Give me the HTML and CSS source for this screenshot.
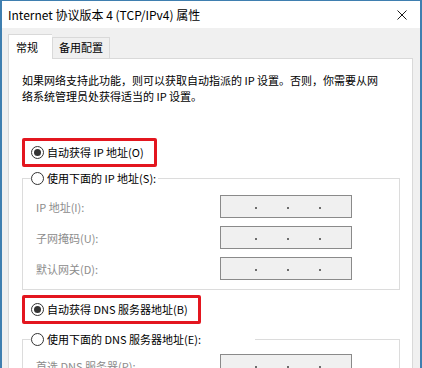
FILE: index.html
```html
<!DOCTYPE html>
<html>
	<head>
		<meta charset="utf-8">
		<link rel="stylesheet" href="styles.css">
	</head>
	<body>
		<div class="window">
			<div class="titlebar">
				<span class="title">Internet 协议版本 4 (TCP/IPv4) 属性</span>
				<svg class="close" width="10" height="10" viewBox="0 0 10 10">
					<path d="M0.5 0.5 L9.5 9.5 M9.5 0.5 L0.5 9.5" stroke="#1a1a1a" stroke-width="1" fill="none"/>
				</svg>
			</div>

			<div class="client">
				<div class="tabs">
					<div class="tab active">常规</div>
					<div class="tab">备用配置</div>
				</div>

				<div class="panel">
					<p class="intro">如果网络支持此功能，则可以获取自动指派的 IP 设置。否则，你需要从网<br>络系统管理员处获得适当的 IP 设置。</p>

					<div class="mark">
						<span class="opt"><span class="radio on"></span>自动获得 IP 地址(O)</span>
					</div>

					<fieldset class="group">
						<legend><span class="radio"></span>使用下面的 IP 地址(S):</legend>
						<div class="row"><span class="lbl">IP 地址(I):</span><span class="ipbox"><i></i><i></i><i></i></span></div>
						<div class="row"><span class="lbl">子网掩码(U):</span><span class="ipbox"><i></i><i></i><i></i></span></div>
						<div class="row"><span class="lbl">默认网关(D):</span><span class="ipbox"><i></i><i></i><i></i></span></div>
					</fieldset>

					<div class="mark second">
						<span class="opt"><span class="radio on"></span>自动获得 DNS 服务器地址(B)</span>
					</div>

					<fieldset class="group dns">
						<legend class="wide"><span class="radio"></span>使用下面的 DNS 服务器地址(E):</legend>
						<div class="row"><span class="lbl">首选 DNS 服务器(P):</span><span class="ipbox"><i></i><i></i><i></i></span></div>
					</fieldset>
				</div>
			</div>
		</div>
	</body>
</html>
```

FILE: styles.css
```css
html {
  box-sizing: border-box;
  font-family: "Noto Sans CJK SC", "Noto Sans", sans-serif;
}

*, *:before, *:after {
  box-sizing: inherit;
}

body {
  margin: 0;
  padding: 0;
  background: #f0f0f0;
  overflow: hidden;
}

.window {
  height: 368px;
  border-top: 1px solid #3f7fb0;
  border-left: 2px solid #3f7fb0;
  border-right: 2px solid #3f7fb0;
  display: flex;
  flex-direction: column;
  overflow: hidden;
}

.titlebar {
  flex: none;
  height: 27px;
  background: #fff;
  display: flex;
  align-items: center;
  justify-content: space-between;
  padding: 0 13px 0 6px;
  font-size: 12px;
  color: #000;
}

.close {
  display: block;
}

.client {
  flex: 1;
  min-height: 0;
  overflow: hidden;
  background: #f0f0f0;
  padding: 6px 7px 0 6px;
}

.tabs {
  display: flex;
  align-items: flex-start;
  height: 24px;
  position: relative;
  z-index: 1;
}

.tab {
  font-size: 11px;
  line-height: 19px;
  height: 21px;
  margin-top: 3px;
  padding: 0 6px;
  border: 1px solid #d9d9d9;
  border-bottom: none;
  background: #f0f0f0;
  color: #000;
}

.tab.active {
  margin-top: 0;
  height: 25px;
  line-height: 24px;
  padding: 0 7px;
  background: #fff;
  border-right: none;
  width: 44px;
}

.panel {
  background: #fff;
  border: 1px solid #d9d9d9;
  padding: 13px 12px 0 13px;
  height: 330px;
  font-size: 11px;
  color: #000;
}

.intro {
  margin: 0;
  line-height: 16px;
}

.mark {
  display: inline-block;
  margin-top: 34px;
  border: 3px solid #e3161f;
  border-radius: 2px;
  padding: 3px 10px 4px 6px;
}

.mark.second {
  margin-top: 5px;
}

.opt, legend {
  display: flex;
  align-items: center;
  line-height: 16px;
  height: 16px;
}

.radio {
  width: 13px;
  height: 13px;
  border: 1px solid #333;
  border-radius: 50%;
  background: #fff;
  margin-right: 3px;
  display: flex;
  align-items: center;
  justify-content: center;
}

.radio.on:after {
  content: "";
  width: 7px;
  height: 7px;
  border-radius: 50%;
  background: #333;
}

.group {
  margin: 3px 0 0 0;
  padding: 0 0 9px 8px;
  border: 1px solid #dcdcdc;
  min-width: 0;
}

.group.dns {
  margin-top: 7px;
}

.group.dns .row:first-of-type {
  margin-top: 7px;
}

legend {
  padding: 0 2px 0 0;
  margin-left: 0;
}

legend.wide {
  width: 224px;
}

.row {
  display: flex;
  align-items: center;
  padding-left: 5px;
  margin-top: 8px;
  height: 23px;
}

.row:first-of-type {
  margin-top: 9px;
}

.lbl {
  width: 184px;
  color: #8c8c8c;
}

.ipbox {
  width: 132px;
  height: 23px;
  background: #f0f0f0;
  border: 1px solid #8a8a8a;
  display: flex;
  align-items: center;
  padding-left: 34px;
  gap: 30px;
}

.ipbox i {
  display: block;
  width: 2px;
  height: 2px;
  background: #6d6d6d;
  margin-top: 3px;
}
```
